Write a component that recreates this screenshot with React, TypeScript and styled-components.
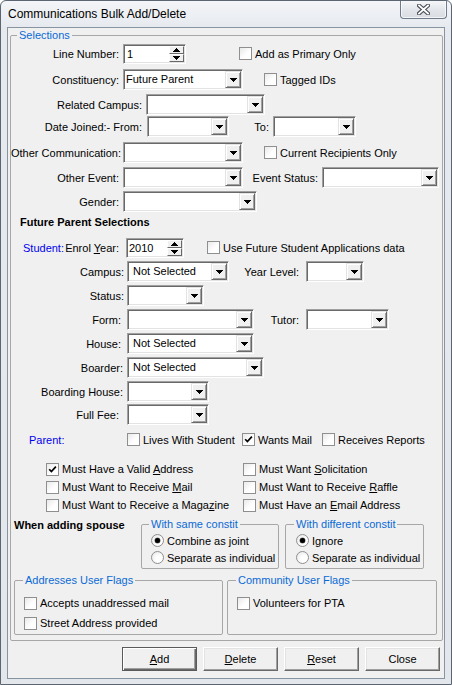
import React from "react";
import styled, { createGlobalStyle, css } from "styled-components";

const Global = createGlobalStyle`
  html, body { margin: 0; padding: 0; background: #ffffff; }
  body {
    font-family: "Liberation Sans", Arial, sans-serif;
    font-size: 11px;
    color: #000;
  }
  * { box-sizing: border-box; }
`;

const Window = styled.div`
  width: 452px;
  height: 685px;
  border: 1px solid #5b6672;
  border-radius: 6px 6px 0 0;
  background: linear-gradient(#f3f5f8 0px, #e6eaef 26px, #e3e7ec 100%);
  display: flex;
  flex-direction: column;
  overflow: hidden;
`;

const TitleBar = styled.div`
  height: 26px;
  flex-shrink: 0;
  display: flex;
  align-items: center;
  justify-content: space-between;
  padding-left: 7px;
`;

const TitleText = styled.div`
  font-size: 12px;
  color: #000;
  white-space: nowrap;
`;

const CloseButton = styled.div`
  width: 47px;
  height: 19px;
  margin-top: -8px;
  margin-right: 4px;
  align-self: flex-start;
  margin-top: -1px;
  border: 1px solid #6f7b88;
  border-top: none;
  border-radius: 0 0 4px 4px;
  background: linear-gradient(#f7f8fa, #e2e6ea 55%, #d8dde3);
  box-shadow: inset 0 0 0 1px rgba(255, 255, 255, 0.7);
  display: flex;
  align-items: center;
  justify-content: center;
`;

const Client = styled.div`
  flex: 1;
  margin: 0 6px 5px 6px;
  border: 1px solid #8794a1;
  background: #f0f0f0;
  display: flex;
  flex-direction: column;
`;

const GroupBox = styled.div<{ $w?: number; $h?: number; $m?: string; $p?: string }>`
  position: relative;
  border: 1px solid #a7a7a7;
  border-radius: 2px;
  ${(p) => (p.$w ? `width: ${p.$w}px;` : "")}
  ${(p) => (p.$h ? `height: ${p.$h}px;` : "")}
  margin: ${(p) => p.$m ?? "0"};
  padding: ${(p) => p.$p ?? "0"};
  flex-shrink: 0;
  display: flex;
  flex-direction: column;
`;

const Caption = styled.span<{ $left: number }>`
  position: absolute;
  top: -7px;
  left: ${(p) => p.$left}px;
  padding: 0 2px;
  line-height: 13px;
  background: #f0f0f0;
  color: #0a6ad6;
  white-space: nowrap;
`;

const Row = styled.div<{ $mt: number; $h?: number; $pl?: number }>`
  display: flex;
  align-items: center;
  flex-shrink: 0;
  height: ${(p) => p.$h ?? 21}px;
  margin-top: ${(p) => p.$mt}px;
  padding-left: ${(p) => p.$pl ?? 0}px;
  white-space: nowrap;
`;

const Label = styled.div<{ $w: number; $pr?: number }>`
  width: ${(p) => p.$w}px;
  flex-shrink: 0;
  text-align: right;
  padding-right: ${(p) => p.$pr ?? 4}px;
  white-space: nowrap;
`;

const SplitLabel = styled.div<{ $w: number; $pl: number; $pr: number }>`
  width: ${(p) => p.$w}px;
  flex-shrink: 0;
  display: flex;
  justify-content: space-between;
  padding-left: ${(p) => p.$pl}px;
  padding-right: ${(p) => p.$pr}px;
  white-space: nowrap;
`;

const BlueText = styled.span<{ $w?: number; $pl?: number }>`
  color: #0000f0;
  ${(p) => (p.$w ? `width: ${p.$w}px; flex-shrink: 0;` : "")}
  padding-left: ${(p) => p.$pl ?? 0}px;
`;

const Heading = styled.div`
  font-weight: bold;
  white-space: nowrap;
`;

const Acc = styled.span`
  text-decoration: underline;
`;

const sunken = css`
  background: #fff;
  border: 1px solid;
  border-color: #a0a0a0 #ffffff #ffffff #a0a0a0;
  box-shadow: inset 1px 1px 0 #696969, inset -1px -1px 0 #e3e3e3;
  padding: 1px;
`;

const raised = css`
  background: #f0f0f0;
  border: 1px solid;
  border-color: #e3e3e3 #696969 #696969 #e3e3e3;
  box-shadow: inset 1px 1px 0 #ffffff, inset -1px -1px 0 #a0a0a0;
`;

const ComboBox = styled.div<{ $w: number; $ml?: number }>`
  ${sunken}
  width: ${(p) => p.$w}px;
  height: 21px;
  margin-left: ${(p) => p.$ml ?? 0}px;
  flex-shrink: 0;
  display: flex;
  align-items: stretch;
`;

const FieldValue = styled.div<{ $indent: number }>`
  flex: 1;
  min-width: 0;
  padding-left: ${(p) => p.$indent}px;
  line-height: 17px;
  white-space: nowrap;
  overflow: hidden;
`;

const DropButton = styled.div`
  ${raised}
  width: 16px;
  flex-shrink: 0;
  display: flex;
  align-items: center;
  justify-content: center;
`;

const SpinBox = styled.div<{ $w: number }>`
  ${sunken}
  width: ${(p) => p.$w}px;
  height: 20px;
  flex-shrink: 0;
  display: flex;
  align-items: stretch;
`;

const SpinColumn = styled.div`
  width: 15px;
  flex-shrink: 0;
  display: flex;
  flex-direction: column;
`;

const SpinButton = styled.div`
  flex: 1;
  background: #f0f0f0;
  border: 1px solid;
  border-color: #ffffff #696969 #696969 #ffffff;
  display: flex;
  align-items: center;
  justify-content: center;
`;

const CheckItem = styled.div<{ $w?: number; $ml?: number }>`
  display: flex;
  align-items: center;
  gap: 3px;
  flex-shrink: 0;
  ${(p) => (p.$w ? `width: ${p.$w}px;` : "")}
  margin-left: ${(p) => p.$ml ?? 0}px;
  white-space: nowrap;
`;

const Box = styled.span`
  width: 13px;
  height: 13px;
  flex-shrink: 0;
  border: 1px solid #8f8f8f;
  background: linear-gradient(135deg, #e9e9e9, #ffffff 60%);
  display: flex;
  align-items: center;
  justify-content: center;
`;

const RadioCircle = styled.span<{ $on: boolean }>`
  width: 13px;
  height: 13px;
  flex-shrink: 0;
  border-radius: 50%;
  border: 1px solid #8f8f8f;
  background: radial-gradient(circle at 65% 65%, #ffffff 30%, #e4e4e4 100%);
  display: flex;
  align-items: center;
  justify-content: center;
  &::after {
    content: "";
    display: ${(p) => (p.$on ? "block" : "none")};
    width: 5px;
    height: 5px;
    border-radius: 50%;
    background: #000;
    box-shadow: 0 0 0 0.5px #777;
  }
`;

const MustGrid = styled.div`
  display: grid;
  grid-template-columns: 197px auto;
  grid-auto-rows: 18px;
  align-items: center;
  margin-top: 10px;
  padding-left: 35px;
  flex-shrink: 0;
`;

const SpouseSection = styled.div`
  display: flex;
  align-items: flex-start;
  margin-top: 5px;
  height: 50px;
  flex-shrink: 0;
`;

const SpouseLabel = styled.div`
  width: 130px;
  flex-shrink: 0;
  padding-left: 3px;
  font-weight: bold;
  line-height: 13px;
  white-space: nowrap;
`;

const RadioRow = styled.div`
  display: flex;
  align-items: center;
  gap: 3px;
  height: 17px;
  white-space: nowrap;
`;

const FlagsSection = styled.div`
  display: flex;
  gap: 4px;
  margin-top: 11px;
  padding-left: 3px;
  flex-shrink: 0;
`;

const FlagRow = styled.div<{ $mt: number }>`
  display: flex;
  align-items: center;
  gap: 3px;
  height: 18px;
  margin-top: ${(p) => p.$mt}px;
  white-space: nowrap;
`;

const ButtonBar = styled.div`
  display: flex;
  justify-content: flex-end;
  gap: 6px;
  margin-top: 6px;
  padding-right: 4px;
`;

const PushButton = styled.div<{ $default?: boolean }>`
  width: 75px;
  height: 24px;
  display: flex;
  align-items: center;
  justify-content: center;
  background: #f0f0f0;
  border: 1px solid;
  border-color: #ffffff #696969 #696969 #ffffff;
  box-shadow: inset -1px -1px 0 #a0a0a0, inset 1px 1px 0 #e3e3e3;
  ${(p) =>
    p.$default &&
    css`
      border-color: #5a5a5a;
      box-shadow: inset 1px 1px 0 #ffffff, inset -1px -1px 0 #696969,
        inset -2px -2px 0 #a0a0a0;
    `}
`;

const Arrow = ({ up = false }: { up?: boolean }) => (
  <svg width="7" height="4" viewBox="0 0 7 4" shapeRendering="crispEdges">
    {up ? (
      <>
        <rect x="3" y="0" width="1" height="1" fill="#000" />
        <rect x="2" y="1" width="3" height="1" fill="#000" />
        <rect x="1" y="2" width="5" height="1" fill="#000" />
        <rect x="0" y="3" width="7" height="1" fill="#000" />
      </>
    ) : (
      <>
        <rect x="0" y="0" width="7" height="1" fill="#000" />
        <rect x="1" y="1" width="5" height="1" fill="#000" />
        <rect x="2" y="2" width="3" height="1" fill="#000" />
        <rect x="3" y="3" width="1" height="1" fill="#000" />
      </>
    )}
  </svg>
);

const Combo = ({ w, ml, value = "", indent = 4 }: { w: number; ml?: number; value?: string; indent?: number }) => (
  <ComboBox $w={w} $ml={ml}>
    <FieldValue $indent={indent}>{value}</FieldValue>
    <DropButton>
      <Arrow />
    </DropButton>
  </ComboBox>
);

const Spin = ({ w, value, indent }: { w: number; value: string; indent: number }) => (
  <SpinBox $w={w}>
    <FieldValue $indent={indent}>{value}</FieldValue>
    <SpinColumn>
      <SpinButton>
        <Arrow up />
      </SpinButton>
      <SpinButton>
        <Arrow />
      </SpinButton>
    </SpinColumn>
  </SpinBox>
);

const CheckMark = () => (
  <svg width="9" height="9" viewBox="0 0 9 9">
    <path d="M1.2 4.2 L3.4 6.6 L7.9 1.6" stroke="#000" strokeWidth="1.7" fill="none" />
  </svg>
);

const Check = ({
  children,
  checked = false,
  w,
  ml,
}: {
  children: React.ReactNode;
  checked?: boolean;
  w?: number;
  ml?: number;
}) => (
  <CheckItem $w={w} $ml={ml}>
    <Box>{checked && <CheckMark />}</Box>
    <span>{children}</span>
  </CheckItem>
);

const Radio = ({ children, on = false }: { children: React.ReactNode; on?: boolean }) => (
  <RadioRow>
    <RadioCircle $on={on} />
    <span>{children}</span>
  </RadioRow>
);

const CloseGlyph = () => (
  <svg width="13" height="11" viewBox="0 0 13 11">
    <path d="M2 1.5 L11 9.5 M11 1.5 L2 9.5" stroke="#4a4f55" strokeWidth="4" strokeLinecap="square" fill="none" />
    <path d="M2 1.5 L11 9.5 M11 1.5 L2 9.5" stroke="#ffffff" strokeWidth="1.8" strokeLinecap="square" fill="none" />
  </svg>
);

export default function App() {
  return (
    <>
      <Global />
      <Window>
        <TitleBar>
          <TitleText>Communications Bulk Add/Delete</TitleText>
          <CloseButton>
            <CloseGlyph />
          </CloseButton>
        </TitleBar>
        <Client>
          <GroupBox $h={606} $m="7px 1px 0 2px">
            <Caption $left={6}>Selections</Caption>

            <Row $mt={7}>
              <Label $w={112}>Line Number:</Label>
              <Spin w={63} value="1" indent={2} />
              <Check ml={53}>Add as Primary Only</Check>
            </Row>
            <Row $mt={5}>
              <Label $w={112}>Constituency:</Label>
              <Combo w={120} value="Future Parent" indent={1} />
              <Check ml={21}>Tagged IDs</Check>
            </Row>
            <Row $mt={4}>
              <Label $w={135}>Related Campus:</Label>
              <Combo w={119} />
            </Row>
            <Row $mt={1}>
              <Label $w={136} $pr={5}>Date Joined:- From:</Label>
              <Combo w={82} />
              <Label $w={44}>To:</Label>
              <Combo w={83} />
            </Row>
            <Row $mt={5}>
              <Label $w={112}>Other Communication:</Label>
              <Combo w={120} />
              <Check ml={21}>Current Recipients Only</Check>
            </Row>
            <Row $mt={4}>
              <Label $w={112}>Other Event:</Label>
              <Combo w={120} />
              <Label $w={79}>Event Status:</Label>
              <Combo w={117} />
            </Row>
            <Row $mt={3}>
              <Label $w={112}>Gender:</Label>
              <Combo w={134} />
            </Row>

            <Row $mt={3} $h={14} $pl={9}>
              <Heading>Future Parent Selections</Heading>
            </Row>

            <Row $mt={8}>
              <SplitLabel $w={115} $pl={12} $pr={7}>
                <BlueText>Student:</BlueText>
                <span>
                  Enrol <Acc>Y</Acc>ear:
                </span>
              </SplitLabel>
              <Spin w={58} value="2010" indent={1} />
              <Check ml={23}>Use Future Student Applications data</Check>
            </Row>
            <Row $mt={3}>
              <Label $w={116} $pr={3}>Campus:</Label>
              <Combo w={102} value="Not Selected" />
              <Label $w={77} $pr={7}>Year Level:</Label>
              <Combo w={58} />
            </Row>
            <Row $mt={3}>
              <Label $w={116} $pr={3}>Status:</Label>
              <Combo w={77} />
            </Row>
            <Row $mt={3}>
              <Label $w={116} $pr={6}>Form:</Label>
              <Combo w={127} />
              <Label $w={52} $pr={7}>Tutor:</Label>
              <Combo w={83} />
            </Row>
            <Row $mt={3}>
              <Label $w={116} $pr={6}>House:</Label>
              <Combo w={127} value="Not Selected" />
            </Row>
            <Row $mt={3}>
              <Label $w={116} $pr={4}>Boarder:</Label>
              <Combo w={137} value="Not Selected" />
            </Row>
            <Row $mt={3}>
              <Label $w={116} $pr={4}>Boarding House:</Label>
              <Combo w={82} />
            </Row>
            <Row $mt={2}>
              <Label $w={116} $pr={8}>Full Fee:</Label>
              <Combo w={82} />
            </Row>
            <Row $mt={4}>
              <BlueText $w={116} $pl={18}>Parent:</BlueText>
              <Check w={115}>Lives With Student</Check>
              <Check w={80} checked>
                Wants Mail
              </Check>
              <Check>Receives Reports</Check>
            </Row>

            <MustGrid>
              <Check checked>
                Must Have a Valid <Acc>A</Acc>ddress
              </Check>
              <Check>
                Must Want <Acc>S</Acc>olicitation
              </Check>
              <Check>
                Must Want to Receive <Acc>M</Acc>ail
              </Check>
              <Check>
                Must Want to Receive <Acc>R</Acc>affle
              </Check>
              <Check>
                Must Want to Receive a Maga<Acc>z</Acc>ine
              </Check>
              <Check>
                Must Have an <Acc>E</Acc>mail Address
              </Check>
            </MustGrid>

            <SpouseSection>
              <SpouseLabel>When adding spouse</SpouseLabel>
              <GroupBox $w={138} $h={45} $m="5px 0 0 0" $p="7px 0 0 9px">
                <Caption $left={7}>With same constit</Caption>
                <Radio on>Combine as joint</Radio>
                <Radio>Separate as individual</Radio>
              </GroupBox>
              <GroupBox $w={139} $h={45} $m="5px 0 0 6px" $p="7px 0 0 10px">
                <Caption $left={8}>With different constit</Caption>
                <Radio on>Ignore</Radio>
                <Radio>Separate as individual</Radio>
              </GroupBox>
            </SpouseSection>

            <FlagsSection>
              <GroupBox $w={209} $h={55} $p="0 0 0 9px">
                <Caption $left={8}>Addresses User Flags</Caption>
                <FlagRow $mt={13}>
                  <Box />
                  <span>Accepts unaddressed mail</span>
                </FlagRow>
                <FlagRow $mt={2}>
                  <Box />
                  <span>Street Address provided</span>
                </FlagRow>
              </GroupBox>
              <GroupBox $w={210} $h={55} $p="0 0 0 9px">
                <Caption $left={8}>Community User Flags</Caption>
                <FlagRow $mt={13}>
                  <Box />
                  <span>Volunteers for PTA</span>
                </FlagRow>
              </GroupBox>
            </FlagsSection>
          </GroupBox>

          <ButtonBar>
            <PushButton $default>
              <span>
                <Acc>A</Acc>dd
              </span>
            </PushButton>
            <PushButton>
              <span>
                <Acc>D</Acc>elete
              </span>
            </PushButton>
            <PushButton>
              <span>
                <Acc>R</Acc>eset
              </span>
            </PushButton>
            <PushButton>Close</PushButton>
          </ButtonBar>
        </Client>
      </Window>
    </>
  );
}
